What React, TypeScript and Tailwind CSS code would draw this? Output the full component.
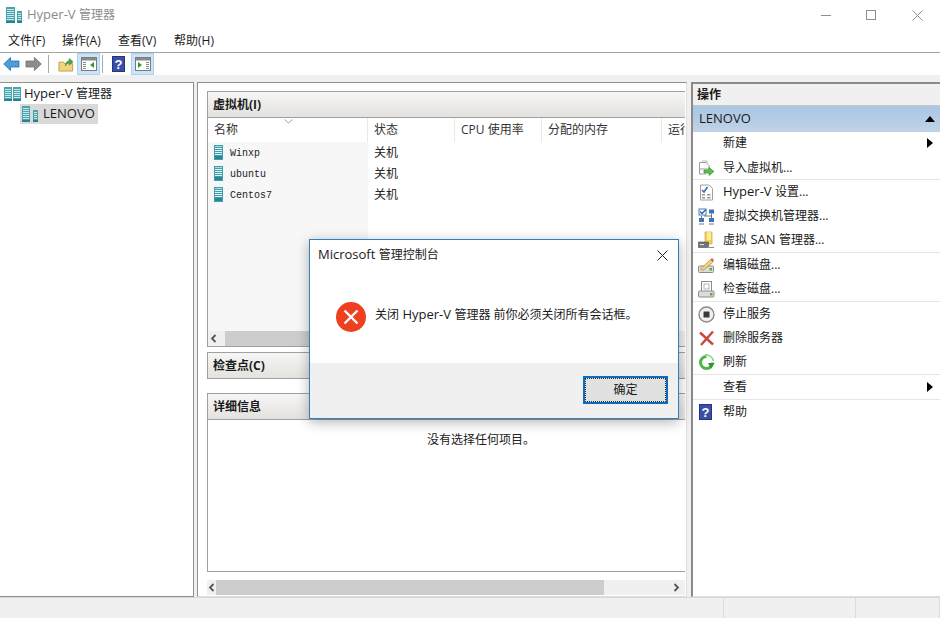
import React from "react";

const FONT = '"Open Sans","Noto Sans CJK SC",sans-serif';

function Bar({ x, y, w, h }: { x: number; y: number; w: number; h: number }) {
  const lines: number[] = [];
  for (let i = y + 2; i < y + h - 3; i += 2) lines.push(i);
  return (
    <g>
      <rect x={x} y={y} width={w} height={h} fill="#4aa3ad" />
      {lines.map((l) => (
        <rect key={l} x={x + 1} y={l} width={w - 2} height={1} fill="#c9e8ea" />
      ))}
      <rect x={x} y={y + h - 2} width={w} height={2} fill="#2c7f8d" />
    </g>
  );
}

function ServerTall() {
  return (
    <svg width="16" height="16" viewBox="0 0 16 16" className="shrink-0">
      <Bar x={0} y={0} w={9} h={16} />
      <Bar x={11} y={4} w={5} h={12} />
    </svg>
  );
}

function ServerRoot() {
  return (
    <svg width="17" height="14" viewBox="0 0 17 14" className="shrink-0">
      <Bar x={0} y={0} w={8} h={14} />
      <Bar x={9} y={0} w={8} h={14} />
    </svg>
  );
}

function VmIcon() {
  return (
    <svg width="9" height="15" viewBox="0 0 9 15" className="shrink-0">
      <rect x="0" y="0" width="9" height="15" fill="#3f9fae" />
      <rect x="1" y="1" width="7" height="1" fill="#a8dde2" />
      {[3, 5, 7, 9].map((y) => (
        <rect key={y} x="1" y={y} width="7" height="1" fill="#e4f5f6" />
      ))}
      <rect x="1" y="11" width="7" height="3" fill="#2c8595" />
    </svg>
  );
}

function BackArrow({ dir, color, stroke }: { dir: "l" | "r"; color: string; stroke: string }) {
  return (
    <svg width="17" height="16" viewBox="0 0 17 16" className="shrink-0">
      <path
        d={dir === "l" ? "M0.7 8 L7.5 1.5 V5 H16 V11 H7.5 V14.5 Z" : "M16.3 8 L9.5 1.5 V5 H1 V11 H9.5 V14.5 Z"}
        fill={color}
        stroke={stroke}
        strokeWidth="0.8"
      />
    </svg>
  );
}

function PaneToggle({ right }: { right?: boolean }) {
  return (
    <div className="w-[23px] h-[22px] bg-[#cce4f7] border border-[#a8d2f0] flex items-center justify-center shrink-0">
      <svg width="16" height="14" viewBox="0 0 16 14">
        <rect x="0.5" y="0.5" width="15" height="13" fill="#fff" stroke="#7b7b7b" />
        <rect x="1" y="1" width="14" height="2.5" fill="#8a8a8a" />
        {[5, 7, 9, 11].map((y) => (
          <rect key={y} x={right ? 11 : 2} y={y} width="3" height="1" fill="#888" />
        ))}
        <path d={right ? "M3 5 L7 8 L3 11 Z" : "M13 5 L9 8 L13 11 Z"} fill="#2d9a3a" />
      </svg>
    </div>
  );
}

function HelpIcon() {
  return (
    <div
      className="w-[13px] h-[16px] bg-[#3a50a8] border border-[#26357e] text-white font-bold flex items-center justify-center shrink-0 text-[13px] leading-none"
      style={{ fontFamily: '"Liberation Sans",sans-serif' }}
    >
      ?
    </div>
  );
}

function FolderUp() {
  return (
    <svg width="16" height="17" viewBox="0 0 17 17" className="shrink-0">
      <path d="M1 6 H6 L7 7.5 H15.5 V15.5 H1 Z" fill="#f0d57d" stroke="#a88d3d" strokeWidth="0.8" />
      <path d="M8 10 C8 6 10 4.5 12 4.5 V2 L16 5.5 L12 9 V6.5 C10.5 6.5 9 8 8 10 Z" fill="#4aa33c" stroke="#2f7a28" strokeWidth="0.5" />
    </svg>
  );
}

const icons: Record<string, React.ReactNode> = {
  import: (
    <svg width="17" height="17" viewBox="0 0 17 17">
      <path d="M1.5 2.5 H8 L11 5.5 V9 H1.5 Z M1.5 9 V14 H8" fill="#fff" stroke="#9a9a9a" />
      <path d="M4 1 H9 V3" fill="none" stroke="#bbb" />
      <path d="M6 10 H11 V7.5 L16 11.5 L11 15.5 V13 H6 Z" fill="#5cc04a" stroke="#3e8e30" strokeWidth="0.7" />
    </svg>
  ),
  settings: (
    <svg width="15" height="17" viewBox="0 0 15 17" className="ml-[1px]">
      <path d="M1.5 1 H10 L13.5 4.5 V16 H1.5 Z" fill="#fff" stroke="#a0a0a0" />
      <path d="M3 6 L5 8 L8.5 3" fill="none" stroke="#3a69b5" strokeWidth="1.5" />
      <rect x="3" y="10" width="3" height="1.5" fill="#999" />
      <rect x="8" y="10" width="3.5" height="1.5" fill="#999" />
      <rect x="3" y="13" width="3" height="1.5" fill="#999" />
      <rect x="8" y="13" width="3.5" height="1.5" fill="#999" />
    </svg>
  ),
  switch: (
    <svg width="17" height="17" viewBox="0 0 17 17">
      <rect x="1" y="1" width="7" height="6" fill="#fff" stroke="#4a78b8" />
      <path d="M2 3.5 L4 5.5 L8 1.5" fill="none" stroke="#2d5fa8" strokeWidth="1.3" />
      <rect x="11" y="1.5" width="5" height="4" fill="#3f74b8" />
      <rect x="1" y="10" width="5" height="4" fill="#3f74b8" />
      <rect x="11" y="10" width="5" height="4" fill="#3f74b8" />
      <path d="M13.5 5.5 V10 M6 8 H13.5 M3.5 8 V10 M1 16 H6 M11 16 H16" stroke="#777" fill="none" />
    </svg>
  ),
  san: (
    <svg width="17" height="18" viewBox="0 0 17 18">
      <path d="M7 1 H14 V13 H7 Z" fill="#f2d25c" stroke="#c9a93a" strokeWidth="0.7" />
      <path d="M9 1 H13 V9 H9 Z" fill="#fbe99a" />
      <rect x="0.5" y="11" width="10" height="5.5" fill="#6f7478" stroke="#4d5154" strokeWidth="0.6" />
      <rect x="2" y="13" width="4" height="1.2" fill="#d8d8d8" />
      <path d="M11 16.5 H16" stroke="#888" />
    </svg>
  ),
  edit: (
    <svg width="17" height="17" viewBox="0 0 17 17">
      <rect x="0.5" y="9" width="15" height="6.5" rx="1" fill="#dcdcdc" stroke="#8d8d8d" />
      <rect x="11.5" y="11" width="2.5" height="2.5" fill="#5caa3c" />
      <path d="M2.5 12 L12.5 2.5 L15 5 L5 13.5 Z" fill="#f2d27a" stroke="#a88b3e" strokeWidth="0.7" />
      <path d="M12.5 2.5 L14 1 L16 3 L15 5 Z" fill="#d8674a" />
    </svg>
  ),
  check: (
    <svg width="17" height="17" viewBox="0 0 17 17">
      <rect x="3.5" y="0.5" width="10" height="10" fill="#fff" stroke="#8d8d8d" />
      <rect x="6" y="3" width="5" height="5" fill="none" stroke="#b5b5b5" />
      <rect x="0.5" y="10" width="15.5" height="6" rx="1" fill="#dcdcdc" stroke="#8d8d8d" />
      <rect x="12" y="12" width="2.5" height="2.5" fill="#5caa3c" />
    </svg>
  ),
  stop: (
    <svg width="17" height="17" viewBox="0 0 17 17">
      <circle cx="8.5" cy="8.5" r="7.5" fill="#f0f0f0" stroke="#8a8a8a" strokeWidth="1.4" />
      <rect x="5.5" y="5.5" width="6" height="6" rx="0.6" fill="#3a3a3a" />
    </svg>
  ),
  del: (
    <svg width="17" height="17" viewBox="0 0 17 17">
      <path d="M2 2.5 L15 14.5 M15 1.5 L3 15" stroke="#c9483e" strokeWidth="2.4" fill="none" />
    </svg>
  ),
  refresh: (
    <svg width="17" height="17" viewBox="0 0 17 17">
      <path d="M8.5 2.5 A6 6 0 1 0 14.5 8.5" fill="none" stroke="#4fb548" strokeWidth="3" />
      <path d="M7 1 A7.5 7.5 0 0 1 15.5 7" fill="none" stroke="#8fd488" strokeWidth="1.6" />
      <path d="M10 9 H16.5 L13 15 Z" fill="#2e9a36" />
    </svg>
  ),
  help: (
    <div className="ml-[1px]">
      <HelpIcon />
    </div>
  ),
};

function Lat({ children }: { children: React.ReactNode }) {
  return <span className="text-[13px]">{children}</span>;
}

type Row = { label: React.ReactNode; icon?: string; arrow?: boolean; sep?: boolean; tall?: boolean };
const rows: Row[] = [
  { label: "新建", arrow: true, tall: true },
  { label: "导入虚拟机...", icon: "import", sep: true },
  { label: <><Lat>Hyper-V </Lat>设置...</>, icon: "settings" },
  { label: "虚拟交换机管理器...", icon: "switch" },
  { label: <>虚拟<Lat> SAN </Lat>管理器...</>, icon: "san", sep: true, tall: true },
  { label: "编辑磁盘...", icon: "edit" },
  { label: "检查磁盘...", icon: "check", sep: true, tall: true },
  { label: "停止服务", icon: "stop" },
  { label: "删除服务器", icon: "del" },
  { label: "刷新", icon: "refresh", sep: true, tall: true },
  { label: "查看", arrow: true, sep: true, tall: true },
  { label: "帮助", icon: "help" },
];

function ActionRow({ r }: { r: Row }) {
  return (
    <div className={(r.tall ? "h-[25px] " : "h-6 ") + (r.sep ? "border-b border-[#e6e6e6]" : "")}>
      <div className="h-[24px] flex items-center relative">
        <div className="w-[30px] pl-[5px] flex items-center justify-start shrink-0">{r.icon ? icons[r.icon] : null}</div>
        <span className="text-[12px] text-[#1a1a1a] whitespace-nowrap">{r.label}</span>
        {r.arrow && (
          <svg className="absolute right-[7px] top-[7px]" width="6" height="10" viewBox="0 0 6 10">
            <path d="M0 0 L6 5 L0 10 Z" fill="#000" />
          </svg>
        )}
      </div>
    </div>
  );
}

function PanelHeader({ title }: { title: string }) {
  return (
    <div className="h-[25px] flex items-center pl-[5px] bg-gradient-to-b from-[#f6f6f6] to-[#e4e2de] text-[12px] font-bold text-[#1a1a1a]">
      {title}
    </div>
  );
}

function Chev({ dir }: { dir: "l" | "r" }) {
  return (
    <svg width="7" height="9" viewBox="0 0 7 9">
      <path d={dir === "l" ? "M5.5 1 L2 4.5 L5.5 8" : "M1.5 1 L5 4.5 L1.5 8"} stroke="#555" strokeWidth="1.8" fill="none" />
    </svg>
  );
}

function HeaderCell({ w, label, clip }: { w: number; label: string; clip?: boolean }) {
  return (
    <div
      className={"h-full flex items-center pl-[6px] border-r border-[#e8e8e8] shrink-0 text-[12px] text-[#333] " + (clip ? "overflow-hidden" : "")}
      style={{ width: w }}
    >
      <span className="whitespace-nowrap">{label}</span>
    </div>
  );
}

const vms = ["Winxp", "ubuntu", "Centos7"];

export default function App() {
  return (
    <div className="relative w-[940px] h-[618px] overflow-hidden bg-[#f0f0f0] flex flex-col" style={{ fontFamily: FONT }}>
      {/* title bar */}
      <div className="h-[30px] bg-white flex items-center pl-[6px] shrink-0 relative">
        <ServerTall />
        <span className="ml-[5px] text-[12px] text-[#8b8b8b]">
          <Lat>Hyper-V </Lat>管理器
        </span>
        <div className="ml-auto flex items-center">
          <div className="w-[46px] flex justify-center pl-[2px]">
            <div className="w-[10px] h-px bg-[#8f8f8f]" />
          </div>
          <div className="w-[46px] flex justify-center">
            <div className="w-[10px] h-[10px] border border-[#8f8f8f]" />
          </div>
          <div className="w-[46px] flex justify-center">
            <svg width="11" height="11" viewBox="0 0 11 11">
              <path d="M0.5 0.5 L10.5 10.5 M10.5 0.5 L0.5 10.5" stroke="#8f8f8f" />
            </svg>
          </div>
        </div>
      </div>
      {/* menu bar */}
      <div className="h-[23px] bg-white border-b border-[#a5a5a5] flex items-center pl-[8px] shrink-0 text-[12px] text-[#1a1a1a]">
        <span className="w-[54px]">文件(F)</span>
        <span className="w-[56px]">操作(A)</span>
        <span className="w-[56px]">查看(V)</span>
        <span>帮助(H)</span>
      </div>
      {/* toolbar */}
      <div className="h-[22px] bg-white flex items-center shrink-0 pl-[3px]">
        <BackArrow dir="l" color="#4d9fdc" stroke="#2a6da8" />
        <div className="w-[5px]" />
        <BackArrow dir="r" color="#8e8e8e" stroke="#6e6e6e" />
        <div className="w-px h-[18px] bg-[#a8a8a8] ml-[6px] mr-[9px]" />
        <FolderUp />
        <div className="w-[3px]" />
        <PaneToggle />
        <div className="w-px h-[18px] bg-[#a8a8a8] ml-[2px] mr-[9px]" />
        <HelpIcon />
        <div className="w-[6px]" />
        <PaneToggle right />
      </div>
      {/* body */}
      <div className="flex-1 min-h-0 flex pt-[7px]">
        {/* left */}
        <div className="w-[194px] bg-white border-r border-t border-b border-[#8f8f8f] pt-px shrink-0">
          <div className="h-[19px] flex items-center pl-[4px] text-[12px] text-[#1a1a1a]">
            <ServerRoot />
            <span className="ml-[3px]">
              <Lat>Hyper-V </Lat>管理器
            </span>
          </div>
          <div className="mt-px ml-[20px] w-[78px] h-[20px] bg-[#d9d9d9] flex items-center pl-[2px] text-[12px] text-[#1a1a1a]">
            <svg width="17" height="16" viewBox="0 0 17 16" className="shrink-0">
              <Bar x={0} y={0} w={8} h={16} />
              <Bar x={11} y={4} w={5} h={12} />
            </svg>
            <span className="ml-[4px]">
              <Lat>LENOVO</Lat>
            </span>
          </div>
        </div>
        <div className="w-[3px] shrink-0" />
        {/* center */}
        <div className="w-[490px] shrink-0 bg-white border-t border-l border-[#8f8f8f] border-r-[#dedede] border-r border-b-[#dedede] border-b flex flex-col pl-[9px] pr-px pt-[8px]">
          {/* VM panel */}
          <div className="h-[256px] shrink-0 border-t border-l border-b border-[#a0a0a0] flex flex-col overflow-hidden">
            <div className="border-b border-[#a0a0a0]">
              <PanelHeader title="虚拟机(I)" />
            </div>
            <div className="h-[24px] flex relative shrink-0 overflow-hidden">
              <HeaderCell w={160} label="名称" />
              <HeaderCell w={87} label="状态" />
              <HeaderCell w={87} label="CPU 使用率" />
              <HeaderCell w={120} label="分配的内存" />
              <HeaderCell w={25} label="运行时间" clip />
              <svg className="absolute left-[76px] top-[1px]" width="9" height="5" viewBox="0 0 9 5">
                <path d="M0.5 0.5 L4.5 4 L8.5 0.5" stroke="#a0a0a0" fill="none" />
              </svg>
            </div>
            <div className="flex-1 min-h-0 flex">
              <div className="w-[160px] bg-[#f7f7f7]">
                {vms.map((v) => (
                  <div key={v} className="h-[21px] flex items-center pl-[6px]">
                    <VmIcon />
                    <span className="ml-[7px] mt-[2px] text-[10px] text-[#222]" style={{ fontFamily: '"Liberation Mono",monospace' }}>
                      {v}
                    </span>
                  </div>
                ))}
              </div>
              <div className="pl-[6px] text-[12px] text-[#222]">
                {vms.map((v) => (
                  <div key={v} className="h-[21px] flex items-center">
                    关机
                  </div>
                ))}
              </div>
            </div>
            <div className="h-[15px] shrink-0 bg-[#f0f0f0] flex items-center">
              <div className="w-[9px] ml-px flex justify-center mr-[7px]">
                <Chev dir="l" />
              </div>
              <div className="w-[388px] h-full bg-[#cdcdcd]" />
            </div>
          </div>
          {/* checkpoints */}
          <div className="mt-[5px] shrink-0 border-t border-l border-b border-[#a0a0a0]">
            <PanelHeader title="检查点(C)" />
          </div>
          {/* details */}
          <div className="mt-[14px] h-[179px] shrink-0 border-t border-l border-b border-[#a0a0a0] flex flex-col">
            <div className="border-b border-[#a0a0a0]">
              <PanelHeader title="详细信息" />
            </div>
            <div className="flex-1 text-center text-[12px] text-[#222] pt-[11px] pl-[69px]">没有选择任何项目。</div>
          </div>
          {/* bottom scrollbar */}
          <div className="mt-[8px] h-[15px] shrink-0 bg-[#f0f0f0] flex items-center">
            <div className="w-[9px] flex justify-center">
              <Chev dir="l" />
            </div>
            <div className="w-[388px] h-full bg-[#cdcdcd]" />
            <div className="ml-auto mr-[5px] flex justify-center">
              <Chev dir="r" />
            </div>
          </div>
        </div>
        <div className="w-[4px] shrink-0" />
        {/* right */}
        <div className="flex-1 bg-white border-l-2 border-t-2 border-[#8a8a8a] border-b border-b-[#dedede]">
          <div className="h-[22px] bg-[#f0f0f0] border-b border-[#c8c8c8] flex items-center pl-[4px] text-[12px] font-bold text-[#1a1a1a]">操作</div>
          <div className="h-[26px] bg-gradient-to-b from-[#a9c6e4] to-[#c0d2e6] flex items-center pl-[6px] pr-[5px] text-[12px] text-[#1a1a1a] justify-between">
            <Lat>LENOVO</Lat>
            <svg width="10" height="6" viewBox="0 0 10 6">
              <path d="M0 6 L5 0 L10 6 Z" fill="#000" />
            </svg>
          </div>
          <div className="-mt-px">
            {rows.map((r, i) => (
              <ActionRow key={i} r={r} />
            ))}
          </div>
        </div>
      </div>
      {/* status bar */}
      <div className="h-[21px] shrink-0 bg-[#f0f0f0] border-t border-[#d8d8d8] flex justify-end">
        <div className="w-[132px] border-l border-[#dcdcdc]" />
        <div className="w-[85px] border-l border-r border-[#dcdcdc]" />
      </div>
      {/* dialog */}
      <div className="absolute left-[309px] top-[239px] w-[370px] h-[180px] bg-white border border-[#2f80bf] shadow-[0_3px_12px_rgba(0,0,0,0.3)] flex flex-col">
        <div className="h-[30px] flex items-center pl-[8px] pr-[10px] justify-between text-[12px] text-[#1a1a1a] shrink-0">
          <span>
            <Lat>Microsoft </Lat>管理控制台
          </span>
          <svg width="11" height="11" viewBox="0 0 11 11">
            <path d="M0.5 0.5 L10.5 10.5 M10.5 0.5 L0.5 10.5" stroke="#222" />
          </svg>
        </div>
        <div className="flex-1 flex items-center pl-[26px]">
          <svg width="30" height="30" viewBox="0 0 30 30" className="shrink-0">
            <circle cx="15" cy="15" r="15" fill="#ee3f1f" />
            <path d="M8.5 8.5 L21.5 21.5 M21.5 8.5 L8.5 21.5" stroke="#fff" strokeWidth="2.4" />
          </svg>
          <span className="ml-[9px] text-[12px] text-[#1a1a1a] -mt-[4px]">
            关闭<Lat> Hyper-V </Lat>管理器 前你必须关闭所有会话框。
          </span>
        </div>
        <div className="h-[55px] bg-[#f0f0f0] shrink-0 flex items-start justify-end pr-[10px] pt-[13px]">
          <div className="w-[85px] h-[28px] bg-[#e1e1e1] border-2 border-[#0f6cbd] flex items-center justify-center text-[12px] text-[#1a1a1a] outline-1 outline-dotted -outline-offset-3 outline-[#333]">
            确定
          </div>
        </div>
      </div>
    </div>
  );
}
